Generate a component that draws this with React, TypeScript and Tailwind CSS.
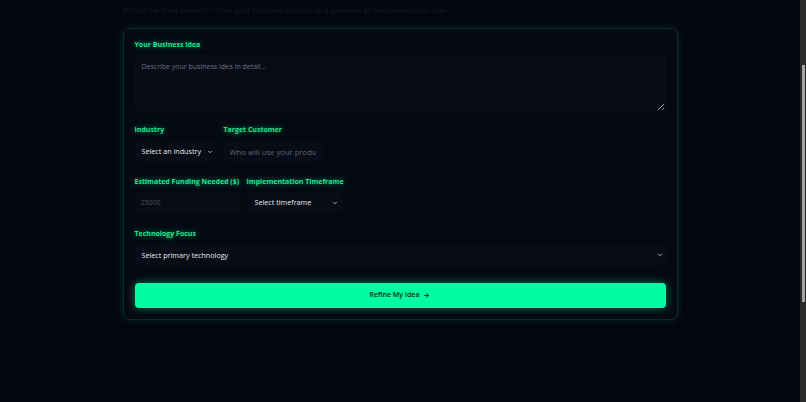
import React from "react";
import { ChevronDown, ArrowRight } from "lucide-react";

const Label = ({ children }: { children: React.ReactNode }) => (
  <div className="text-[7px] leading-[10px] font-bold text-[#1de892] whitespace-nowrap [text-shadow:0_0_6px_rgba(0,255,150,0.6)]">
    {children}
  </div>
);

const FakeSelect = ({
  text,
  className,
}: {
  text: string;
  className: string;
}) => (
  <div
    className={
      "flex items-center justify-between rounded-[3px] bg-[#080c17] text-[7.2px] text-[#e6e8ee] " +
      className
    }
  >
    <span className="whitespace-nowrap">{text}</span>
    <ChevronDown size={6} strokeWidth={3} className="text-[#d8dbe2] shrink-0" />
  </div>
);

export default function App() {
  return (
    <div className="flex h-[402px] w-[806px] overflow-hidden bg-[#03060f] font-['Open_Sans',sans-serif]">
      <div className="flex-1 bg-[linear-gradient(rgba(255,255,255,0.006)_1px,transparent_1px),linear-gradient(90deg,rgba(255,255,255,0.006)_1px,transparent_1px)] bg-[size:22px_22px]">
        <div className="mx-auto w-[555px]">
          <p className="pt-[5px] mb-[12px] text-[7.5px] leading-[11px] text-[#141a27] whitespace-nowrap">
            Fill out the form below to refine your business concept and generate an implementation plan
          </p>
          <div className="rounded-[7px] border border-[#0a2c29] bg-[#050913] px-[11px] pt-[11px] pb-[11px] shadow-[0_0_9px_rgba(0,255,170,0.14)]">
            <Label>Your Business Idea</Label>
            <textarea
              placeholder="Describe your business idea in detail..."
              className="mt-[5px] block h-[57px] w-full resize-y rounded-[3px] border border-[#090e19] bg-[#080c17] px-[6px] py-[6px] text-[7px] leading-[10px] text-[#d0d4dc] placeholder:text-[#6b7080] outline-none"
            />

            <div className="mt-[13px] flex gap-[7px]">
              <div className="flex w-[82px] flex-col gap-[6px]">
                <Label>Industry</Label>
                <FakeSelect text="Select an industry" className="h-[21px] pl-[7px] pr-[4px]" />
              </div>
              <div className="flex w-[98px] flex-col gap-[6px]">
                <Label>Target Customer</Label>
                <input
                  placeholder="Who will use your product?"
                  className="h-[21px] w-full rounded-[3px] bg-[#080c17] px-[6px] text-[7.7px] text-[#d0d4dc] placeholder:text-[#5f6473] outline-none"
                />
              </div>
            </div>

            <div className="mt-[15px] flex gap-[7px]">
              <div className="flex w-[105px] flex-col gap-[5px]">
                <Label>Estimated Funding Needed ($)</Label>
                <input
                  placeholder="25000"
                  className="h-[21px] w-full rounded-[3px] bg-[#080c17] px-[6px] text-[7px] text-[#d0d4dc] placeholder:text-[#4a4f5c] outline-none"
                />
              </div>
              <div className="flex w-[95px] flex-col gap-[5px]">
                <Label>Implementation Timeframe</Label>
                <FakeSelect text="Select timeframe" className="h-[21px] pl-[8px] pr-[4px]" />
              </div>
            </div>

            <div className="mt-[16px] flex flex-col gap-[5px]">
              <Label>Technology Focus</Label>
              <FakeSelect text="Select primary technology" className="h-[22px] pl-[7px] pr-[3px]" />
            </div>

            <button className="mt-[17px] flex h-[25px] w-full items-center justify-center gap-[4px] rounded-[4px] bg-[#00fda2] text-[7px] font-semibold text-[#07261a] shadow-[0_0_9px_rgba(0,255,160,0.45)]">
              <span>Refine My Idea</span>
              <ArrowRight size={7} strokeWidth={3} />
            </button>
          </div>
        </div>
      </div>
      <div className="relative h-full w-[6px] bg-[#2b2b2b]">
        <div className="absolute left-[2px] top-[65px] h-[237px] w-[3px] bg-[#a3a3a3]" />
      </div>
    </div>
  );
}
